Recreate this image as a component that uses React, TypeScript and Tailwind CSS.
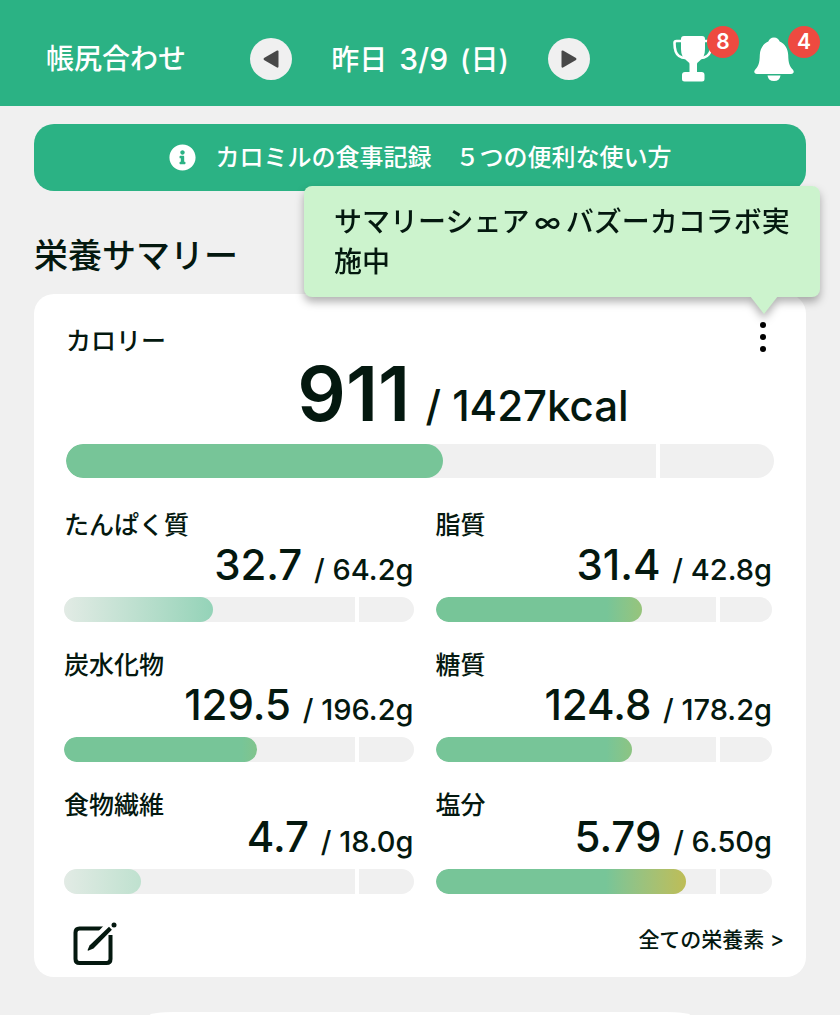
import clsx from 'clsx';
import { FaInfoCircle } from 'react-icons/fa';

interface Nutrient {
  name: string;
  value: string;
  target: string;
  percent: number;
  fill: string;
  compact?: boolean;
}

const nutrients: Nutrient[] = [
  { name: 'たんぱく質', value: '32.7', target: '64.2g', percent: 42.5, fill: 'bg-linear-to-r from-[#e2ebe5] to-[#94d3b8]' },
  { name: '脂質', value: '31.4', target: '42.8g', percent: 61.3, fill: 'bg-linear-to-r from-[#77c598] from-83% to-[#97c47b]' },
  { name: '炭水化物', value: '129.5', target: '196.2g', percent: 55.2, fill: 'bg-linear-to-r from-[#77c598] from-92% to-[#81c48c]' },
  { name: '糖質', value: '124.8', target: '178.2g', percent: 58.4, fill: 'bg-linear-to-r from-[#77c598] from-87% to-[#8dc482]' },
  { name: '食物繊維', value: '4.7', target: '18.0g', percent: 22, fill: 'bg-linear-to-r from-[#e2ebe5] to-[#bfe1cf]', compact: true },
  { name: '塩分', value: '5.79', target: '6.50g', percent: 74.3, fill: 'bg-linear-to-r from-[#77c598] from-68% to-[#bebd56]', compact: true },
];

const Bar = ({ label, percent, fill, size }: { label: string; percent: number; fill: string; size: string }) => (
  <div
    role="progressbar"
    aria-label={label}
    aria-valuenow={percent}
    className={clsx('relative overflow-hidden rounded-full bg-[#f0f0f0]', size)}
  >
    <div className="absolute inset-y-0 left-[83.4%] w-1 bg-white" />
    <div className={clsx('relative h-full rounded-full', fill)} style={{ width: `${percent}%` }} />
  </div>
);

const Badge = ({ count }: { count: number }) => (
  <span className="absolute -top-2.5 -right-[26px] flex size-8 items-center justify-center rounded-full bg-[#ee4a40] text-[21px] leading-8 font-semibold">
    {count}
  </span>
);

const TrophyIcon = () => (
  <svg viewBox="0 0 40 46" className="h-[46px] w-10" fill="currentColor">
    <path d="M11 0h18q3 0 3 3v10q0 8-5 11.500-3 2-3 4V36h4.500q3 0 3 3v4q0 2.500-2.500 2.500H11.500Q9 45.500 9 43v-4q0-3 3-3h4.500v-7.500q0-2-3-4Q8 21 8 13V3q0-3 3-3z" />
    <path d="M9 5H3.500Q1.500 5 1.500 7q0 10 4.500 13 3 2 6 2M31 5h5.500q2 0 2 2 0 10-4.500 13-3 2-6 2" fill="none" stroke="currentColor" strokeWidth="2.600" />
  </svg>
);

const BellIcon = () => (
  <svg viewBox="0 0 40 46" className="h-[46px] w-10" fill="currentColor">
    <path d="M20 1.500c3 0 5 1.800 5.700 4 5.500 2.500 8.300 7.500 8.500 13.500.2 8 1.300 11 4.500 14.500 2 2.300 1 4.500-1.700 4.500H3c-2.700 0-3.700-2.200-1.700-4.500C4.500 30 5.600 27 5.800 19 6 13 8.800 8 14.300 5.500c.7-2.200 2.700-4 5.700-4z" />
    <path d="M13.500 39.500h13q-.8 5.500-6.500 5.500t-6.500-5.500z" />
  </svg>
);

const EditIcon = () => (
  <svg viewBox="0 0 44 44" className="size-11" fill="none" stroke="currentColor">
    <path d="M30.500 6.500H6.500Q2.500 6.500 2.500 10.500v26.500q0 4 4 4h27q4 0 4-4V13" strokeWidth="4" />
    <path d="M36 5L16 26" stroke="white" strokeWidth="9.500" />
    <path d="M36 4.800l2.900 2.900L20.500 26.400l-4.900 2.200q-1.200.3-.9-.9l1.800-4.300z" fill="currentColor" stroke="none" />
    <circle cx="41" cy="2.900" r="2.500" fill="currentColor" stroke="none" />
  </svg>
);

export default function App() {
  return (
    <div className="flex min-h-screen flex-col bg-[#f0f0f0] font-['Inter','Noto_Sans_CJK_JP',sans-serif] font-medium text-[#04180f]">
      <header className="grid h-[106px] grid-cols-[1fr_auto_1fr] items-center bg-[#2bb284] px-[46px] pt-3 text-[28px] leading-10 text-white">
        <button className="justify-self-start">帳尻合わせ</button>
        <div className="flex w-[340px] items-center justify-between">
          <button aria-label="前の日" className="flex size-[42px] items-center justify-center rounded-full bg-[#f0f0f0] text-[#484848]">
            <svg viewBox="0 0 16 18" className="h-[18px] w-4" fill="currentColor">
              <path d="M14 .5q1.500-.5 1.500 1v15q0 1.500-1.500 1L1 10Q0 9 1 8z" />
            </svg>
          </button>
          <div className="flex items-baseline gap-3">
            <span>昨日</span>
            <span className="text-[30px]">3/9</span>
            <span>(日)</span>
          </div>
          <button aria-label="次の日" className="flex size-[42px] items-center justify-center rounded-full bg-[#f0f0f0] text-[#484848]">
            <svg viewBox="0 0 16 18" className="h-[18px] w-4" fill="currentColor">
              <path d="M2 .5Q.5 0 .5 1.500v15q0 1.500 1.500 1L15 10q1-1 0-2z" />
            </svg>
          </button>
        </div>
        <div className="flex gap-[41px] justify-self-end">
          <button aria-label="トロフィー" className="relative">
            <TrophyIcon />
            <Badge count={8} />
          </button>
          <button aria-label="お知らせ" className="relative">
            <BellIcon />
            <Badge count={4} />
          </button>
        </div>
      </header>

      <main className="flex flex-1 flex-col px-[34px] pt-[18px]">
        <a href="#guide" className="flex h-[67px] items-center justify-center gap-5 rounded-[20px] bg-[#2bb284] text-2xl text-white">
          <FaInfoCircle className="size-[27px]" />
          カロミルの食事記録　５つの便利な使い方
        </a>

        <h1 className="mt-10 text-[34px] leading-[50px]">栄養サマリー</h1>

        <section className="relative mt-[13px] rounded-[20px] bg-white pt-[31px] pb-[11px]">
          <div className="absolute -top-[108px] -right-[14px] h-[111px] w-[516px] rounded-lg bg-[#ccf3cd] px-[30px] pt-4 text-[28px] leading-10 drop-shadow-[0_5px_4px_rgba(0,0,0,0.3)]">
            サマリーシェア&thinsp;∞&thinsp;バズーカコラボ実施中
            <svg viewBox="0 0 28 18" className="absolute right-[42px] -bottom-[17px] h-[18px] w-7" fill="#ccf3cd">
              <path d="M0 0h28L14 18z" />
            </svg>
          </div>
          <button aria-label="メニュー" className="absolute top-7 right-[38px] text-black">
            <svg viewBox="0 0 10 30" className="h-[30px] w-2.5" fill="currentColor">
              <circle cx="5" cy="3" r="3" />
              <circle cx="5" cy="15" r="3" />
              <circle cx="5" cy="27" r="3" />
            </svg>
          </button>

          <div className="px-8">
            <h2 className="text-[25px] leading-[32px]">カロリー</h2>
            <p className="-mt-0.5 mb-[13px] pl-[86px] text-center text-[76px] leading-[76px] font-semibold">
              911<span className="ml-1 text-[42px] leading-10 font-medium"> / 1427kcal</span>
            </p>
            <Bar label="カロリー" percent={53.2} fill="bg-[#77c598]" size="h-[34px]" />
          </div>

          <div className="mt-[31px] grid grid-cols-[349fr_336fr] gap-x-[22px] gap-y-[27px] pr-[34px] pl-[30px]">
            {nutrients.map((n) => (
              <div key={n.name}>
                <h3 className="text-[25px] leading-[32px]">{n.name}</h3>
                <p className={clsx('mb-3 text-right text-[42px] leading-10', n.compact ? '-mt-1' : 'mt-1')}>
                  {n.value}
                  <span className="ml-1 text-[29px] leading-7"> / {n.target}</span>
                </p>
                <Bar label={n.name} percent={n.percent} fill={n.fill} size="h-[25px]" />
              </div>
            ))}
          </div>

          <div className="mt-7 flex items-start justify-between pr-[22px] pl-[39px]">
            <button aria-label="編集">
              <EditIcon />
            </button>
            <a href="#all" className="text-[21px] leading-9">
              全ての栄養素 &gt;
            </a>
          </div>
        </section>

        {/* top edge of the next card */}
        <div className="mx-auto mt-[35px] w-[70%] flex-1 rounded-t-[24px_100%] bg-white" />
      </main>
    </div>
  );
}
